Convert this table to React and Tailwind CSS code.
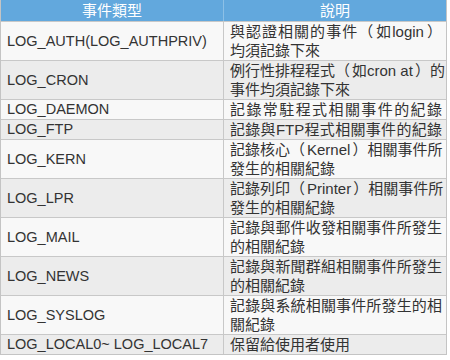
import React from "react";

const P = ({ children }) => <span className="mx-[2px]">{children}</span>;

const rows = [
  ["LOG_AUTH(LOG_AUTHPRIV)", [<>與認證相關的事件（<P>如login</P>）</>, "均須記錄下來"]],
  ["LOG_CRON", [<>例行性排程程式（<P>如cron at</P>）的</>, "事件均須記錄下來"]],
  ["LOG_DAEMON", ["記錄常駐程式相關事件的紀錄"]],
  ["LOG_FTP", ["記錄與FTP程式相關事件的紀錄"]],
  ["LOG_KERN", [<>記錄核心（<P>Kernel</P>）相關事件所</>, "發生的相關紀錄"]],
  ["LOG_LPR", [<>記錄列印（<P>Printer</P>）相關事件所</>, "發生的相關紀錄"]],
  ["LOG_MAIL", ["記錄與郵件收發相關事件所發生", "的相關紀錄"]],
  ["LOG_NEWS", ["記錄與新聞群組相關事件所發生", "的相關紀錄"]],
  ["LOG_SYSLOG", ["記錄與系統相關事件所發生的相", "關紀錄"]],
  ["LOG_LOCAL0~ LOG_LOCAL7", ["保留給使用者使用"]],
];

export default function App() {
  return (
    <div lang="zh-TW" className="w-[450px] h-[360px] bg-white">
      <div
        className="w-[447px] border-l border-r border-b border-[#c4c4c4] text-[#333333]"
        style={{ fontFamily: '"Liberation Sans", "Noto Sans CJK TC", sans-serif' }}
      >
        <div className="grid grid-cols-[223px_1fr] h-[21px] bg-[#62a8dd] text-white text-[15px] leading-[21px]">
          <div className="text-center border-r border-[#8cc0e6]">事件類型</div>
          <div className="text-center">說明</div>
        </div>
        {rows.map(([k, lines], i) => (
          <div
            key={k}
            className={
              "grid grid-cols-[223px_1fr] border-t border-[#c8c8c8] " +
              (i % 2 === 0 ? "bg-[#f8f8f8]" : "bg-[#ececec]")
            }
          >
            <div className="flex items-center pl-[6px] border-r border-[#c8c8c8] text-[14.5px] leading-[19px]">
              {k}
            </div>
            <div className="pl-[6px] pr-[4px] text-[15px] leading-[19px]">
              {lines.map((l, j) => (
                <div
                  key={j}
                  className={
                    "whitespace-nowrap " +
                    (j === 0 && i !== rows.length - 1
                      ? "text-justify [text-align-last:justify] [text-justify:inter-character]"
                      : "")
                  }
                >
                  {l}
                </div>
              ))}
            </div>
          </div>
        ))}
      </div>
    </div>
  );
}
